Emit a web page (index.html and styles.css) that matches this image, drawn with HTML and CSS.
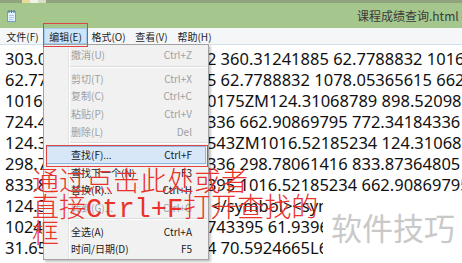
FILE: index.html
```html
<!DOCTYPE html>
<html lang="zh-CN">
<head>
<meta charset="utf-8">
<title>课程成绩查询.html - 记事本</title>
<link rel="stylesheet" href="styles.css">
</head>
<body>
<div class="window">
  <div class="topstrip"><span class="sq sq-y"></span><span class="sq sq-w"></span><span class="sq sq-g"></span></div>
  <div class="titlebar">
    <svg class="appicon" width="9" height="13" viewBox="0 0 9 13">
      <rect x="0.5" y="2.5" width="8" height="10" fill="#e3f2fc" stroke="#6f9fc6"/>
      <path d="M2 1v3M4.5 1v3M7 1v3" stroke="#4a6f92" stroke-width="1"/>
      <path d="M2 6.5h5M2 8.5h5M2 10.5h4" stroke="#a9cbe6" stroke-width="1"/>
    </svg>
    <span class="title">课程成绩查询.html - 记事本</span>
  </div>
  <div class="menubar">
    <span class="mi">文件(F)</span>
    <span class="mi open">编辑(E)</span>
    <span class="mi">格式(O)</span>
    <span class="mi">查看(V)</span>
    <span class="mi">帮助(H)</span>
  </div>
  <div class="editor">
    <div class="ln">303.07754543 772.3418432 360.31241885 62.7788832 1016.52185234 124.31068789</div>
    <div class="ln">62.7788832 1016.52185235 62.7788832 1078.05365615 662.90869795</div>
    <div class="ln">1016.52185234 833.873640175ZM124.31068789 898.52098612 772.34184336</div>
    <div class="ln">724.41068789 124.310687336 662.90869795 772.34184336 898.52098612</div>
    <div class="ln">124.31068789 662.908697543ZM1016.52185234 124.31068789 298.78061416</div>
    <div class="ln">298.78061416 124.310687336 298.78061416 833.87364805 1016.52185234</div>
    <div class="ln">833.87364805 124.310687395 1016.52185234 662.90869795 772.34184336</div>
    <div class="ln">124.31068789 62.7788832 &lt;/symbol&gt;&lt;symbol id="icon-search" viewBox="0 0 1024 1024"&gt;</div>
    <div class="ln">1024.52185234 833.87364743395 61.93964137 124.31068789</div>
    <div class="ln">31.65432185 124.31068784 70.5924665L662.90869795</div>
  </div>

  <div class="dropdown">
    <div class="item off"><span>撤消(U)</span><span>Ctrl+Z</span></div>
    <div class="sep"></div>
    <div class="item off"><span>剪切(T)</span><span>Ctrl+X</span></div>
    <div class="item off"><span>复制(C)</span><span>Ctrl+C</span></div>
    <div class="item off"><span>粘贴(P)</span><span>Ctrl+V</span></div>
    <div class="item off"><span>删除(L)</span><span>Del</span></div>
    <div class="sep"></div>
    <div class="item hot"><span>查找(F)...</span><span>Ctrl+F</span></div>
    <div class="item"><span>查找下一个(N)</span><span>F3</span></div>
    <div class="item"><span>替换(R)...</span><span>Ctrl+H</span></div>
    <div class="item off"><span>转到(G)...</span><span>Ctrl+G</span></div>
    <div class="sep"></div>
    <div class="item"><span>全选(A)</span><span>Ctrl+A</span></div>
    <div class="item"><span>时间/日期(D)</span><span>F5</span></div>
  </div>

  <div class="mark mark-edit"></div>
  <div class="mark mark-find"></div>

  <div class="watermark">软件技巧</div>

  <div class="note">
    <div>通过点击此处或者</div>
    <div>直接Ctrl+F打开查找的</div>
    <div>框</div>
  </div>
</div>
</body>
</html>
```
FILE: styles.css
```css
html, body {
  margin: 0;
  padding: 0;
  background: #fff;
}
body {
  width: 462px;
  height: 263px;
  overflow: hidden;
  font-family: "Noto Sans", "Noto Sans CJK SC", sans-serif;
}
.window {
  position: relative;
  width: 462px;
  height: 263px;
  overflow: hidden;
  background: #fff;
}
.topstrip {
  height: 3px;
  background: #8fa37d;
  display: flex;
  padding-left: 22px;
}
.sq { width: 8px; height: 3px; }
.sq-y { background: #e9dc9a; }
.sq-w { background: #f3f2e6; }
.sq-g { background: #dcdccc; }

.titlebar {
  height: 25px;
  background: #a5c78e;
  display: flex;
  align-items: center;
  padding-left: 7px;
  white-space: nowrap;
  overflow: hidden;
}
.appicon { flex: none; }
.title {
  margin-left: 341px;
  font-family: "Noto Sans CJK SC", sans-serif;
  font-size: 12px;
  color: #3a3a3a;
}

.menubar {
  height: 16px;
  background: #f5f6f7;
  display: flex;
  padding-left: 1px;
  font-family: "Noto Sans CJK SC", sans-serif;
  font-size: 10px;
  color: #1e1e1e;
}
.mi {
  width: 43px;
  display: flex;
  align-items: center;
  justify-content: center;
  box-sizing: border-box;
}
.mi.open {
  background: #cde5f7;
  border: 1px solid #a3cbee;
}

.editor {
  border-top: 1px solid #d3dfeb;
  padding: 3px 0 0 5px;
  font-family: "Noto Sans", sans-serif;
  font-size: 16.5px;
  line-height: 21px;
  color: #111;
  white-space: nowrap;
}
.ln { height: 21px; }

.dropdown {
  position: absolute;
  left: 43px;
  top: 44px;
  width: 166px;
  box-sizing: border-box;
  padding: 1px 0;
  border: 1px solid #a3a3a3;
  background: linear-gradient(to right, #f1f1f1 0 24px, #e2e3e3 24px 25px, #ffffff 25px 26px, #f1f1f1 26px);
  box-shadow: 2px 2px 2px rgba(0, 0, 0, 0.22);
  font-family: "Noto Sans CJK SC", sans-serif;
  font-size: 10px;
  color: #1a1a1a;
}
.item {
  height: 17.6px;
  margin: 0 2px;
  padding: 0 13px 0 24px;
  border: 1px solid transparent;
  box-sizing: border-box;
  display: flex;
  align-items: center;
  justify-content: space-between;
  white-space: nowrap;
}
.item.off { color: #a0a0a0; }
.item.hot {
  background: #d7e7f8;
  border-color: #8db6e2;
}
.sep {
  height: 6px;
  margin: 0 1px 0 26px;
  display: flex;
  flex-direction: column;
  justify-content: center;
}
.sep::before {
  content: "";
  height: 1px;
  background: #dcdcdc;
  border-bottom: 1px solid #ffffff;
}

.mark {
  position: absolute;
  box-sizing: border-box;
  border: 1.5px solid #dc4541;
}
.mark-edit { left: 43px; top: 23px; width: 45px; height: 24px; }
.mark-find { left: 46px; top: 145px; width: 162px; height: 22px; }

.watermark {
  position: absolute;
  left: 323px;
  top: 194px;
  right: 0;
  bottom: 0;
  background: #fff;
  padding: 17px 0 0 8px;
  font-family: "Noto Sans CJK SC", sans-serif;
  font-size: 31px;
  line-height: 31px;
  color: #c9c9c9;
  white-space: nowrap;
}

.note {
  position: absolute;
  left: 32px;
  top: 171px;
  font-family: "Liberation Mono", "Noto Sans CJK SC", monospace;
  font-weight: 300;
  font-size: 27px;
  line-height: 26px;
  color: #e8322a;
  white-space: nowrap;
}
```
